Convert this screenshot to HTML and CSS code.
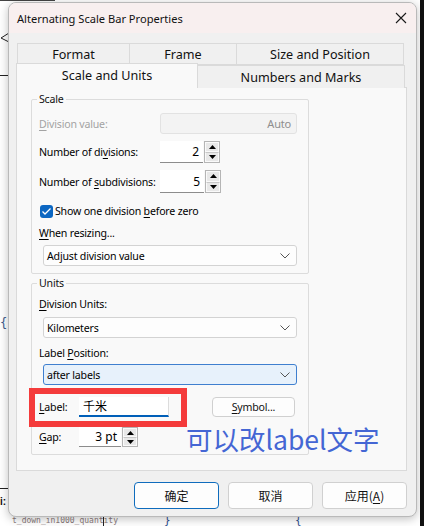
FILE: index.html
```html
<!DOCTYPE html>
<html lang="en">
<head>
<meta charset="utf-8">
<title>Alternating Scale Bar Properties</title>
<link rel="stylesheet" href="styles.css">
</head>
<body>
<div class="desktop">
  <div class="bg-topline"></div>
  <svg class="bg-arrow" width="9" height="12" viewBox="0 0 9 12"><polyline points="9,1 1,6 9,10" fill="none" stroke="#222" stroke-width="1"/></svg>
  <div class="bg-hline bg-h1"></div>
  <div class="bg-hline bg-h2"></div>
  <span class="bg-brace">{</span>
  <span class="bg-bold">i:</span>
  <span class="bg-code">t_down_in1000_quantity</span>
  <div class="bg-vline"></div>
  <span class="bg-curl bg-c1">}</span>
  <span class="bg-curl bg-c2">{</span>
  <div class="bg-right"></div>
</div>

<div class="dialog">
  <div class="titlebar">
    <span class="title">Alternating Scale Bar Properties</span>
    <svg class="close" width="12" height="12" viewBox="0 0 12 12"><path d="M1 1 L11 11 M11 1 L1 11" stroke="#1a1a1a" stroke-width="1.1" fill="none"/></svg>
  </div>

  <div class="dlg-body">
    <div class="tabs">
      <div class="tabrow back">
        <div class="tab w-format">Format</div>
        <div class="tab w-frame">Frame</div>
        <div class="tab w-size">Size and Position</div>
      </div>
      <div class="tabrow front">
        <div class="tab active w-scale">Scale and Units</div>
        <div class="tab w-numbers">Numbers and Marks</div>
      </div>
    </div>

    <div class="panel">
      <fieldset class="group g-scale">
        <legend>Scale</legend>
        <div class="row r-div">
          <span class="lbl disabled"><u>D</u>ivision value:</span>
          <div class="field readonly">Auto</div>
        </div>
        <div class="row r-num">
          <span class="lbl">Number of di<u>v</u>isions:</span>
          <div class="spin w43"><span class="num">2</span></div>
          <div class="spinner"><span class="sb"><svg width="7" height="4" viewBox="0 0 7 4"><path d="M3.5 0 L7 4 L0 4Z" fill="#000"/></svg></span><span class="sb"><svg width="7" height="4" viewBox="0 0 7 4"><path d="M0 0 L7 0 L3.5 4Z" fill="#000"/></svg></span></div>
        </div>
        <div class="row r-sub">
          <span class="lbl">Number of <u>s</u>ubdivisions:</span>
          <div class="spin w44"><span class="num">5</span></div>
          <div class="spinner"><span class="sb"><svg width="7" height="4" viewBox="0 0 7 4"><path d="M3.5 0 L7 4 L0 4Z" fill="#000"/></svg></span><span class="sb"><svg width="7" height="4" viewBox="0 0 7 4"><path d="M0 0 L7 0 L3.5 4Z" fill="#000"/></svg></span></div>
        </div>
        <div class="row r-check">
          <span class="checkbox"><svg width="11" height="9" viewBox="0 0 11 9"><polyline points="1.5,4.5 4,7 9.5,1.5" fill="none" stroke="#fff" stroke-width="1.3"/></svg></span>
          <span class="chk-lbl">Show one division <u>b</u>efore zero</span>
        </div>
        <div class="line r-when"><u>W</u>hen resizing...</div>
        <div class="select r-adjust"><span>Adjust division value</span><svg class="chev" width="10" height="6" viewBox="0 0 10 6"><polyline points="0.5,0.5 5,5 9.5,0.5" fill="none" stroke="#555" stroke-width="1"/></svg></div>
      </fieldset>

      <fieldset class="group g-units">
        <legend>Units</legend>
        <div class="line r-du"><u>D</u>ivision Units:</div>
        <div class="select r-km"><span>Kilometers</span><svg class="chev" width="10" height="6" viewBox="0 0 10 6"><polyline points="0.5,0.5 5,5 9.5,0.5" fill="none" stroke="#555" stroke-width="1"/></svg></div>
        <div class="line r-lp">Label <u>P</u>osition:</div>
        <div class="select focus r-after"><span>after labels</span><svg class="chev" width="10" height="6" viewBox="0 0 10 6"><polyline points="0.5,0.5 5,5 9.5,0.5" fill="none" stroke="#555" stroke-width="1"/></svg></div>
        <div class="row r-label">
          <span class="lbl short"><u>L</u>abel:</span>
          <div class="textbox">千米</div>
          <div class="btn symbol"><u>S</u>ymbol...</div>
        </div>
        <div class="row r-gap">
          <span class="lbl short"><u>G</u>ap:</span>
          <div class="spin w42"><span class="num">3 pt</span></div>
          <div class="spinner"><span class="sb"><svg width="7" height="4" viewBox="0 0 7 4"><path d="M3.5 0 L7 4 L0 4Z" fill="#000"/></svg></span><span class="sb"><svg width="7" height="4" viewBox="0 0 7 4"><path d="M0 0 L7 0 L3.5 4Z" fill="#000"/></svg></span></div>
        </div>
      </fieldset>

      <div class="red-box"></div>
      <div class="note">可以改label文字</div>
    </div>

    <div class="buttons">
      <div class="btn big default">确定</div>
      <div class="btn big">取消</div>
      <div class="btn big">应用(<u>A</u>)</div>
    </div>
  </div>
</div>
</body>
</html>
```

FILE: styles.css
```css
* { box-sizing: border-box; }
html, body { margin: 0; padding: 0; }
body {
  width: 424px;
  height: 526px;
  background: #ffffff;
  position: relative;
  overflow: hidden;
  font-family: "Noto Sans", "Liberation Sans", "Noto Sans CJK SC", sans-serif;
  font-size: 11.1px;
  color: #000;
}
u { text-decoration: underline; text-underline-offset: 2px; }

/* ---------- desktop behind the dialog ---------- */
.desktop { position: absolute; inset: 0; }
.bg-topline { position: absolute; left: 0; top: 0; width: 55px; height: 1px; background: #444; }
.bg-arrow { position: absolute; left: 0; top: 32px; }
.bg-hline { position: absolute; left: 0; width: 9px; height: 1px; background: #222; }
.bg-h1 { top: 75px; }
.bg-h2 { top: 488px; }
.bg-brace { position: absolute; left: 0; top: 316px; font: 12px "DejaVu Sans Mono", monospace; color: #3b5a8a; }
.bg-bold { position: absolute; left: 0; top: 496px; font: bold 10px "Liberation Sans", sans-serif; color: #111; }
.bg-code { position: absolute; left: 12px; top: 516px; font: 8px "DejaVu Sans Mono", monospace; color: #8a7a7a; }
.bg-vline { position: absolute; left: 103px; top: 517px; width: 1px; height: 9px; background: #222; }
.bg-curl { position: absolute; top: 514px; font: 11px "DejaVu Sans Mono", monospace; color: #2f4f8f; }
.bg-c1 { left: 164px; }
.bg-c2 { left: 295px; }
.bg-right { position: absolute; right: 0; top: 0; width: 4px; height: 526px; background: #111; }

/* ---------- dialog ---------- */
.dialog {
  position: relative;
  z-index: 1;
  margin: 2px 0 0 8px;
  width: 409px;
  height: 515px;
  background: #f0f0f0;
  border: 1px solid #b9b9b9;
  border-radius: 8px;
  overflow: hidden;
  box-shadow: 0 2px 10px rgba(0,0,0,0.25);
}
.titlebar {
  height: 30px;
  background: #f8efef;
  display: flex;
  align-items: center;
  justify-content: space-between;
  padding: 0 9px 0 8px;
}
.title { font-size: 11.1px; color: #111; }
.close { display: block; }

.dlg-body { padding: 10px 9px 0 7px; }

/* ---------- tabs ---------- */
.tabs { display: flex; flex-direction: column; }
.tabrow { display: flex; }
.tabrow.back { margin-left: 1px; height: 22px; }
.tabrow.front { margin-top: -2px; align-items: flex-end; height: 25px; position: relative; z-index: 2; }
.tab {
  display: flex;
  align-items: center;
  justify-content: center;
  font-size: 12.6px;
  color: #111;
  background: #f0f0f0;
  border: 1px solid #dadada;
  height: 22px;
  margin-right: -1px;
}
.tab.active {
  background: #f9f9f9;
  border-bottom: none;
  height: 25px;
  padding-bottom: 2px;
  position: relative;
}
.tabrow.front .tab:not(.active) { height: 23px; border-bottom: none; }
.w-format { width: 113px; }
.w-frame { width: 108px; }
.w-size { width: 168px; }
.w-scale { width: 182px; }
.w-numbers { width: 208px; }

/* ---------- panel ---------- */
.panel {
  position: relative;
  width: 391px;
  height: 384px;
  margin-top: -1px;
  background: #f9f9f9;
  border: 1px solid #dadada;
  padding: 3px 0 0 14px;
  font-size: 10.6px;
  letter-spacing: -0.2px;
}
.group {
  margin: 0;
  width: 278px;
  border: 1px solid #dcdcdc;
  border-radius: 2px;
  padding: 0 0 0 7px;
}
.group legend {
  padding: 0 2px;
  margin-left: -2px;
  line-height: 16px;
  color: #111;
}
.g-scale { height: 183px; }
.g-units { height: 180px; margin-top: 1px; }

.row { display: flex; align-items: center; }
.lbl { width: 121px; flex: none; white-space: nowrap; }
.lbl.short { width: 40px; }
.disabled { color: #a3a3a3; }
.line { height: 16px; line-height: 16px; white-space: nowrap; }

.r-div { margin-top: 6px; height: 21px; }
.r-num { margin-top: 7px; height: 22px; }
.r-sub { margin-top: 7px; height: 23px; }
.r-check { margin-top: 11px; height: 14px; }
.r-when { margin-top: 7px; }
.r-adjust { margin-top: 4px; }

.field.readonly {
  width: 137px;
  height: 21px;
  background: #f3f3f3;
  border: 1px solid #e2e2e2;
  border-radius: 3px;
  color: #8e8e8e;
  text-align: right;
  padding-right: 5px;
  line-height: 19px;
  font-size: 11px;
}
.spin {
  height: 100%;
  background: #fff;
  border-bottom: 1px solid #8c8c8c;
  display: flex;
  align-items: center;
  justify-content: flex-end;
  padding-right: 4px;
}
.w43 { width: 43px; }
.w44 { width: 44px; }
.w42 { width: 42px; }
.num { font-size: 12px; white-space: nowrap; letter-spacing: 0; }
.spinner {
  width: 16px;
  height: 100%;
  display: flex;
  flex-direction: column;
  border: 1px solid #b5b5b5;
  background: #e8e8e8;
  margin-left: 1px;
}
.sb {
  flex: 1;
  display: flex;
  align-items: center;
  justify-content: center;
  border: 1px solid #fafafa;
}
.sb + .sb { border-top: 1px solid #c8c8c8; }
.sb svg { display: block; }

.checkbox {
  width: 13px;
  height: 13px;
  margin-left: 1px;
  border-radius: 3px;
  background: #0c67c2;
  display: flex;
  align-items: center;
  justify-content: center;
}
.chk-lbl { margin-left: 2px; white-space: nowrap; }

.select {
  margin-left: 4px;
  width: 254px;
  height: 21px;
  background: #fdfdfd;
  border: 1px solid #d3d3d3;
  border-radius: 3px;
  display: flex;
  align-items: center;
  justify-content: space-between;
  padding: 0 6px 0 3px;
}
.select.focus { background: #e7f1fb; border-color: #3f7fcf; }
.chev { display: block; }

.r-du { margin-top: 5px; }
.r-km { margin-top: 5px; }
.r-lp { margin-top: 7px; }
.r-after { margin-top: 3px; }
.r-label { margin-top: 12px; height: 20px; }
.r-gap { margin-top: 10px; height: 20px; }

.textbox {
  width: 90px;
  height: 20px;
  background: #fff;
  border-right: 1px solid #dcdcdc;
  border-bottom: 2px solid #005fb8;
  font-family: "Noto Sans CJK SC", sans-serif;
  font-size: 12px;
  letter-spacing: 0;
  line-height: 18px;
  padding-left: 4px;
}
.btn {
  display: flex;
  align-items: center;
  justify-content: center;
  background: #fdfdfd;
  border: 1px solid #d0d0d0;
  border-radius: 4px;
  color: #111;
}
.btn.symbol { width: 83px; height: 20px; margin-left: 43px; }

.red-box {
  position: absolute;
  left: 12px;
  top: 300px;
  width: 158px;
  height: 39px;
  border: 6px solid #f43b3b;
}
.note {
  position: absolute;
  left: 169px;
  top: 336px;
  font-family: "Noto Sans CJK SC", sans-serif;
  font-size: 26.5px;
  letter-spacing: 0;
  line-height: 30px;
  color: #4466d4;
  white-space: nowrap;
}

/* ---------- buttons ---------- */
.buttons {
  display: flex;
  justify-content: flex-end;
  gap: 9px;
  margin-top: 11px;
}
.btn.big {
  width: 85px;
  height: 27px;
  font-family: "Noto Sans CJK SC", sans-serif;
  font-size: 12px;
}
.btn.default { border-color: #0f6cbd; }
```
